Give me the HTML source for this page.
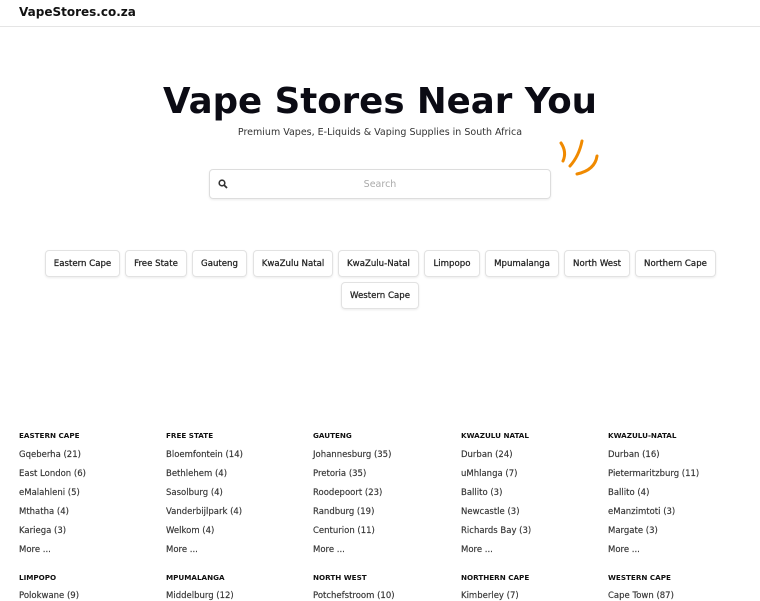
<!DOCTYPE html>
<html><head><style>
*{margin:0;padding:0;box-sizing:border-box}
body{width:760px;height:600px;overflow:hidden;background:#fff;font-family:"DejaVu Sans","Liberation Sans",sans-serif;color:#111;position:relative}
.a{position:absolute;white-space:nowrap}
.hdr{position:absolute;left:0;top:0;width:760px;height:27px;border-bottom:1px solid #e5e5e5}
.btn{position:absolute;height:27px;border:1px solid #e2e2e2;border-radius:4px;box-shadow:0 1px 2px rgba(0,0,0,.08);font-size:8.6px;color:#222;display:flex;align-items:center;justify-content:center;white-space:nowrap;-webkit-text-stroke:0.25px #222}
.h{font-size:7.2px;font-weight:bold;color:#111}
.i{font-size:8.5px;color:#333;-webkit-text-stroke:0.15px #333}
</style></head><body>
<div class="hdr"></div>
<div class="a" style="left:19px;top:5px;font-size:12px;font-weight:bold">VapeStores.co.za</div>
<div class="a" style="left:0;width:760px;text-align:center;top:81px;font-size:35.6px;font-weight:bold;color:#0b0b14">Vape Stores Near You</div>
<div class="a" style="left:0;width:760px;text-align:center;top:127px;font-size:9.5px;color:#333">Premium Vapes, E-Liquids &amp; Vaping Supplies in South Africa</div>
<svg class="a" style="left:555px;top:138px" width="50" height="48" viewBox="0 0 50 48"><g fill="none" stroke="#f08a00" stroke-width="3" stroke-linecap="round"><path d="M6 5 Q12 14 8 23"/><path d="M27 3 Q24 18 15 28"/><path d="M42 18 Q40 32 22 36"/></g></svg>
<div class="a" style="left:209px;top:169px;width:342px;height:30px;border:1px solid #ddd;border-radius:4px;box-shadow:0 1px 2px rgba(0,0,0,.08)"></div>
<svg class="a" style="left:218px;top:179px" width="10" height="10" viewBox="0 0 10 10"><circle cx="4" cy="4" r="2.8" fill="none" stroke="#333" stroke-width="1.6"/><path d="M6 6 L9 9" stroke="#333" stroke-width="1.8"/></svg>
<div class="a" style="left:209px;width:342px;text-align:center;top:179px;font-size:9.5px;color:#aaa">Search</div>
<div class="btn" style="left:45px;top:250px;width:75px">Eastern Cape</div>
<div class="btn" style="left:125px;top:250px;width:62px">Free State</div>
<div class="btn" style="left:192px;top:250px;width:55px">Gauteng</div>
<div class="btn" style="left:253px;top:250px;width:80px">KwaZulu Natal</div>
<div class="btn" style="left:338px;top:250px;width:81px">KwaZulu-Natal</div>
<div class="btn" style="left:424px;top:250px;width:56px">Limpopo</div>
<div class="btn" style="left:485px;top:250px;width:74px">Mpumalanga</div>
<div class="btn" style="left:564px;top:250px;width:66px">North West</div>
<div class="btn" style="left:635px;top:250px;width:81px">Northern Cape</div>
<div class="btn" style="left:341px;top:282px;width:78px">Western Cape</div>

<div class="a" style="left:19px;top:431px"><div class="h">EASTERN CAPE</div></div>
<div class="a" style="left:166px;top:431px"><div class="h">FREE STATE</div></div>
<div class="a" style="left:313px;top:431px"><div class="h">GAUTENG</div></div>
<div class="a" style="left:461px;top:431px"><div class="h">KWAZULU NATAL</div></div>
<div class="a" style="left:608px;top:431px"><div class="h">KWAZULU-NATAL</div></div>

<div class="a i" style="left:19px;top:446px;line-height:19px">Gqeberha (21)<br>East London (6)<br>eMalahleni (5)<br>Mthatha (4)<br>Kariega (3)<br>More ...</div>
<div class="a i" style="left:166px;top:446px;line-height:19px">Bloemfontein (14)<br>Bethlehem (4)<br>Sasolburg (4)<br>Vanderbijlpark (4)<br>Welkom (4)<br>More ...</div>
<div class="a i" style="left:313px;top:446px;line-height:19px">Johannesburg (35)<br>Pretoria (35)<br>Roodepoort (23)<br>Randburg (19)<br>Centurion (11)<br>More ...</div>
<div class="a i" style="left:461px;top:446px;line-height:19px">Durban (24)<br>uMhlanga (7)<br>Ballito (3)<br>Newcastle (3)<br>Richards Bay (3)<br>More ...</div>
<div class="a i" style="left:608px;top:446px;line-height:19px">Durban (16)<br>Pietermaritzburg (11)<br>Ballito (4)<br>eManzimtoti (3)<br>Margate (3)<br>More ...</div>

<div class="a" style="left:19px;top:573px"><div class="h">LIMPOPO</div></div>
<div class="a" style="left:166px;top:573px"><div class="h">MPUMALANGA</div></div>
<div class="a" style="left:313px;top:573px"><div class="h">NORTH WEST</div></div>
<div class="a" style="left:461px;top:573px"><div class="h">NORTHERN CAPE</div></div>
<div class="a" style="left:608px;top:573px"><div class="h">WESTERN CAPE</div></div>
<div class="a i" style="left:19px;top:591px">Polokwane (9)</div>
<div class="a i" style="left:166px;top:591px">Middelburg (12)</div>
<div class="a i" style="left:313px;top:591px">Potchefstroom (10)</div>
<div class="a i" style="left:461px;top:591px">Kimberley (7)</div>
<div class="a i" style="left:608px;top:591px">Cape Town (87)</div>
</body></html>
